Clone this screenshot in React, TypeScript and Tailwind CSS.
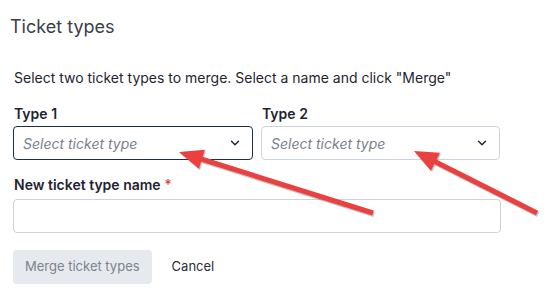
import { ChevronDown } from "lucide-react";

type Pt = [number, number];

// annotation arrow: line from tail to tip with a filled head
function Arrow({ tail, tip }: { tail: Pt; tip: Pt }) {
  const dx = tip[0] - tail[0];
  const dy = tip[1] - tail[1];
  const len = Math.hypot(dx, dy);
  const ux = dx / len;
  const uy = dy / len;
  const headLen = 24;
  const headW = 10;
  const bx = tip[0] - ux * headLen;
  const by = tip[1] - uy * headLen;
  const head = `${tip[0]},${tip[1]} ${bx - uy * headW},${by + ux * headW} ${bx + uy * headW},${by - ux * headW}`;
  return (
    <g>
      <g transform="translate(1,1.5)" opacity="0.35">
        <line x1={tail[0]} y1={tail[1]} x2={bx + ux * 4} y2={by + uy * 4} stroke="#555" strokeWidth="5" />
        <polygon points={head} fill="#555" />
      </g>
      <line x1={tail[0]} y1={tail[1]} x2={bx + ux * 4} y2={by + uy * 4} stroke="#ea4040" strokeWidth="5" />
      <polygon points={head} fill="#ea4040" />
    </g>
  );
}

function Select({ focused }: { focused?: boolean }) {
  return (
    <div
      className={`flex h-[34px] items-center justify-between rounded-[4px] border bg-white pl-[9px] pr-[10px] ${
        focused ? "border-[#1e2f3e]" : "border-[#cdd3dc]"
      }`}
    >
      <span className="text-[14px] italic text-[#7a818c]">Select ticket type</span>
      <ChevronDown className="h-[14px] w-[14px] text-[#1f2937]" strokeWidth={2.5} />
    </div>
  );
}

export default function App() {
  return (
    <div className="relative h-[295px] w-[559px] overflow-hidden bg-white font-['Inter',sans-serif] text-[#1f2430]">
      <h1 className="pl-[10px] pt-[15px] text-[18px] leading-[24px] text-[#3b3d48]">Ticket types</h1>

      <div className="pl-[14px] pr-[59px]">
        <p className="mt-[30px] text-[14px] leading-[18px]">
          Select two ticket types to merge. Select a name and click "Merge"
        </p>

        <div className="mt-[18px] grid grid-cols-2 gap-[8px]">
          <div className="-ml-px">
            <label className="mb-[3px] block pl-px text-[14px] font-semibold leading-[18px]">Type 1</label>
            <Select focused />
          </div>
          <div>
            <label className="mb-[3px] block pl-px text-[14px] font-semibold leading-[18px]">Type 2</label>
            <Select />
          </div>
        </div>

        <label className="mt-[16px] mb-[5px] block text-[14px] font-semibold leading-[18px]">
          New ticket type name <span className="text-[#d9534f]">*</span>
        </label>
        <input className="-ml-px block h-[34px] w-[488px] rounded-[4px] border border-[#cdd3dc] bg-white" />

        <div className="mt-[17px] flex items-center gap-[20px]">
          <button className="-ml-px h-[34px] rounded-[4px] bg-[#e6e9ee] px-[12px] text-[13px] text-[#7c838d]">
            Merge ticket types
          </button>
          <button className="text-[13px] text-[#2a2f3a]">Cancel</button>
        </div>
      </div>

      <svg className="pointer-events-none absolute inset-0" width="559" height="295">
        <Arrow tail={[373, 213]} tip={[179, 152]} />
        <Arrow tail={[537, 213]} tip={[414, 151]} />
      </svg>
    </div>
  );
}
